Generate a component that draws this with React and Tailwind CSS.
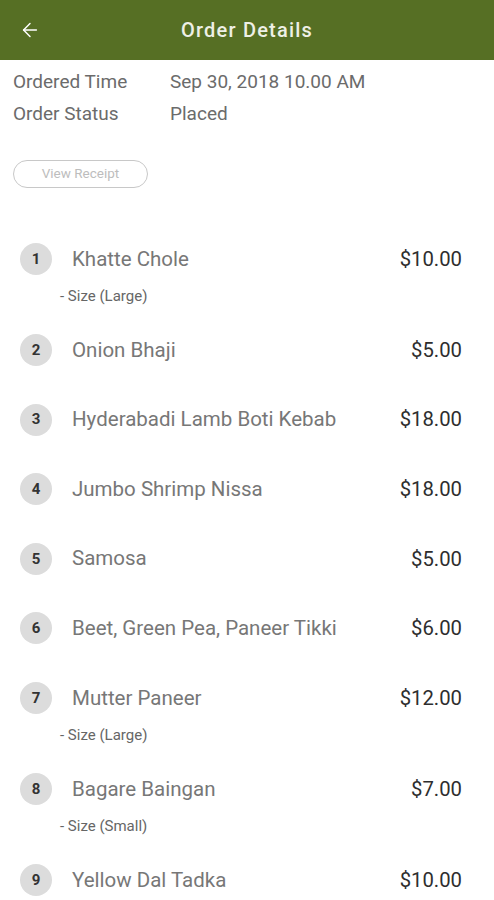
import { ArrowLeft } from "lucide-react";

const items = [
  { name: "Khatte Chole", price: "$10.00", size: "Large" },
  { name: "Onion Bhaji", price: "$5.00" },
  { name: "Hyderabadi Lamb Boti Kebab", price: "$18.00" },
  { name: "Jumbo Shrimp Nissa", price: "$18.00" },
  { name: "Samosa", price: "$5.00" },
  { name: "Beet, Green Pea, Paneer Tikki", price: "$6.00" },
  { name: "Mutter Paneer", price: "$12.00", size: "Large" },
  { name: "Bagare Baingan", price: "$7.00", size: "Small" },
  { name: "Yellow Dal Tadka", price: "$10.00" },
];

export default function App() {
  return (
    <div className="h-[900px] w-[494px] overflow-hidden bg-white font-['Roboto',sans-serif]">
      <div className="relative flex h-[60px] items-center justify-center bg-[#566f24]">
        <ArrowLeft className="absolute left-[19px] top-[19px] h-[22px] w-[22px] text-white" strokeWidth={1.6} />
        <h1 className="text-[20px] font-medium tracking-[1.2px] text-[#eef0e6]">Order Details</h1>
      </div>

      <div className="px-[13px] pt-[6px] text-[19px] leading-[32px] text-[#6b6b6b]">
        <div className="flex">
          <span className="w-[157px]">Ordered Time</span>
          <span>Sep 30, 2018 10.00 AM</span>
        </div>
        <div className="flex">
          <span className="w-[157px]">Order Status</span>
          <span>Placed</span>
        </div>
        <button className="mt-[30px] h-[28px] w-[135px] rounded-full border border-[#c8c8c8] pb-[2px] text-[13.5px] leading-[24px] text-[#bdbdbd]">
          View Receipt
        </button>
      </div>

      <div className="mt-[51px] px-[20px]">
        {items.map((item, i) => (
          <div key={i} className={item.size ? "pb-[23px]" : "pb-[29.6px]"}>
            <div className="flex h-[40px] items-center">
              <div className="flex h-[32px] w-[32px] items-center justify-center rounded-full bg-[#dcdcdc] text-[15px] font-bold text-[#333]">
                {i + 1}
              </div>
              <span className="ml-[20px] flex-1 text-[20.5px] text-[#777]">{item.name}</span>
              <span className="mr-[12px] text-[20.3px] text-[#2e2e2e]">{item.price}</span>
            </div>
            {item.size && (
              <div className="ml-[40px] mt-[6px] h-[22px] text-[15px] leading-[22px] text-[#666]">
                - Size ({item.size})
              </div>
            )}
          </div>
        ))}
      </div>
    </div>
  );
}
